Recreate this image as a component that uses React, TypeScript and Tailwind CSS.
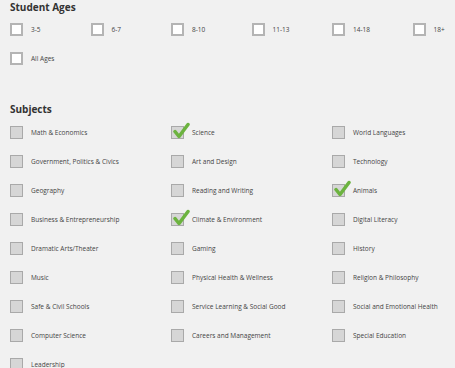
import React from 'react';

// Age ranges shown in a single wide row (last column runs past the window)
const ages = ['3-5', '6-7', '8-10', '11-13', '14-18', '18+', 'All Ages'];

const subjects: { label: string; checked?: boolean }[] = [
    { label: 'Math & Economics' },
    { label: 'Science', checked: true },
    { label: 'World Languages' },
    { label: 'Government, Politics & Civics' },
    { label: 'Art and Design' },
    { label: 'Technology' },
    { label: 'Geography' },
    { label: 'Reading and Writing' },
    { label: 'Animals', checked: true },
    { label: 'Business & Entrepreneurship' },
    { label: 'Climate & Environment', checked: true },
    { label: 'Digital Literacy' },
    { label: 'Dramatic Arts/Theater' },
    { label: 'Gaming' },
    { label: 'History' },
    { label: 'Music' },
    { label: 'Physical Health & Wellness' },
    { label: 'Religion & Philosophy' },
    { label: 'Safe & Civil Schools' },
    { label: 'Service Learning & Social Good' },
    { label: 'Social and Emotional Health' },
    { label: 'Computer Science' },
    { label: 'Careers and Management' },
    { label: 'Special Education' },
    { label: 'Leadership' },
];

const CheckMark = () => (
    <svg
        className="absolute left-[1px] top-[-5px] pointer-events-none"
        width="17"
        height="18"
        viewBox="0 0 17 18"
        fill="none"
    >
        <path
            d="M2 9.5 L6 14.5 L15 2.5"
            stroke="#6cb33f"
            strokeWidth="3.5"
            strokeLinecap="round"
            strokeLinejoin="round"
        />
    </svg>
);

const AgeOption: React.FC<{ label: string }> = ({ label }) => (
    <label className="flex items-center gap-[8px] h-[29px] cursor-pointer">
        <span className="w-[13px] h-[13px] bg-white border-2 border-[#b4b4b4] flex-shrink-0" />
        <span className="text-[6.5px] text-[#444]">{label}</span>
    </label>
);

const SubjectOption: React.FC<{ label: string; checked?: boolean }> = ({ label, checked }) => (
    <label className="flex items-center gap-[8px] h-[29px] cursor-pointer">
        <span className="relative w-[13px] h-[13px] bg-[#d6d6d6] border border-[#a9a9a9] flex-shrink-0">
            {checked && <CheckMark />}
        </span>
        <span className="text-[6.5px] text-[#444] whitespace-nowrap">{label}</span>
    </label>
);

export default function App() {
    return (
        <div className="w-[455px] h-[368px] overflow-hidden bg-[#f1f1f1] font-['Open_Sans',sans-serif]">
            <div className="pl-[10px] w-[493px]">
                {/* Student Ages */}
                <h2 className="text-[10px] font-bold leading-[14px] text-[#333]">Student Ages</h2>
                <div className="grid grid-cols-[repeat(6,80.5px)] mt-[1px]">
                    {ages.map(a => (
                        <AgeOption key={a} label={a} />
                    ))}
                </div>

                {/* Subjects */}
                <h2 className="text-[10px] font-bold leading-[14px] text-[#333] mt-[29px]">Subjects</h2>
                <div className="grid grid-cols-[repeat(3,161px)] mt-[2px]">
                    {subjects.map(s => (
                        <SubjectOption key={s.label} label={s.label} checked={s.checked} />
                    ))}
                </div>
            </div>
        </div>
    );
}
